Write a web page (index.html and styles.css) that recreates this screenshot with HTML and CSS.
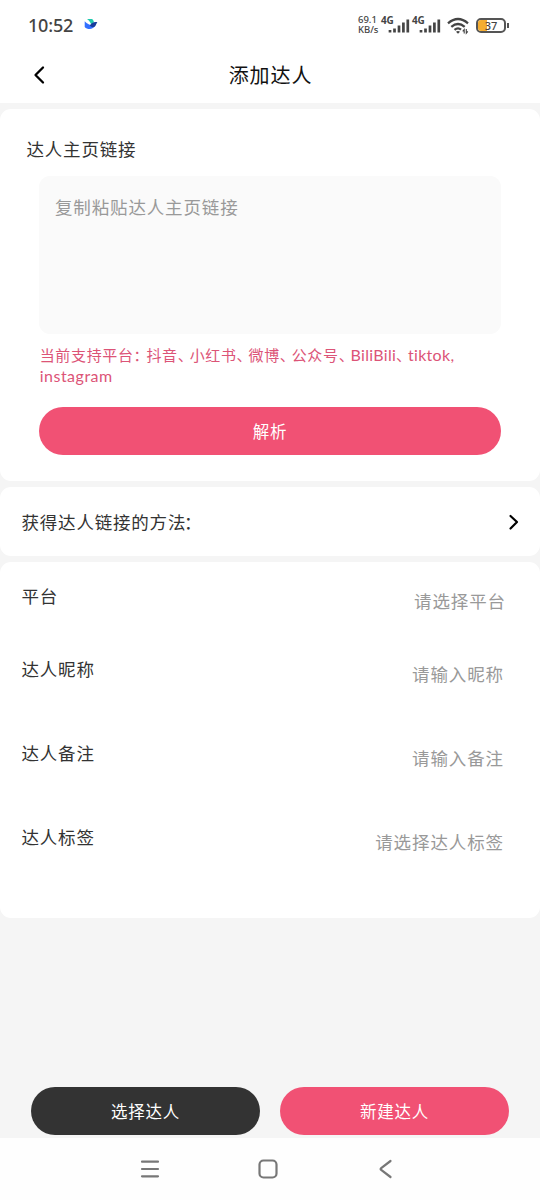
FILE: index.html
```html
<!DOCTYPE html>
<html lang="zh-CN">
<head>
<meta charset="utf-8">
<title>添加达人</title>
<link rel="stylesheet" href="styles.css">
</head>
<body>
<div class="screen">
  <header class="top">
    <div class="status">
      <span class="clock">10:52</span>
      <svg class="bird" width="14" height="13" viewBox="0 0 14 13">
        <path d="M3 1h5.2c1 .9 1.6 2 1.8 3.3L7.2 6.2C6.200 4 4.900 2.300 3 1z" fill="#1fc9ae"/>
        <path d="M.7 3.300v5.600C3.600 12.200 9.600 11.600 11.500 7.300 7.600 8.600 3.600 6.400.7 3.300z" fill="#3370ff"/>
        <path d="M5.800 7.400C7.500 5.300 9.600 3.400 13.400 4.200 12.100 5.400 11.900 8.700 9.600 9.100 8.100 9.300 6.900 8.500 5.800 7.400z" fill="#173c9c"/>
      </svg>
      <span class="rate"><span>69.1</span><span>KB/s</span></span>
      <span class="gen">4G</span>
      <svg class="bars" width="22" height="14" viewBox="0 0 22 14"><path d="M2 11v2.500M6.500 9.500v4M11 6.500v7M15.400 3.500v10M19.800.5v13" stroke="#444" stroke-width="2.700"/></svg>
      <span class="gen gen-second">4G</span>
      <svg class="bars" width="22" height="14" viewBox="0 0 22 14"><path d="M2 11v2.500M6.500 9.500v4M11 6.500v7M15.400 3.500v10M19.800.5v13" stroke="#444" stroke-width="2.700"/></svg>
      <svg class="wifi" width="23" height="18" viewBox="0 0 23 18">
        <g fill="none" stroke="#444" stroke-width="2.300"><path d="M1 6.300Q11 -2.300 21 6.300M4.300 9.800Q11 4.200 17.700 9.800M7.500 12.900Q11 10 14 12.600"/></g>
        <path d="M9 14.800Q11 13.200 13 14.800L11 16.800z" fill="#444"/>
        <path d="M17.200 16.500v-4l-1.500 1.800M19.300 12v4.200l1.500-1.800" fill="none" stroke="#444" stroke-width="1.100"/>
      </svg>
      <span class="battery"><span class="cell"><i class="charge"></i><b class="level">37</b></span><i class="cap"></i></span>
    </div>
    <div class="titlebar">
      <svg class="back" width="12" height="20" viewBox="0 0 12 20"><path d="M10 2.500L2.500 10 10 17.500" fill="none" stroke="#000" stroke-width="2.300" stroke-linecap="round" stroke-linejoin="round"/></svg>
      <h1 class="title">添加达人</h1>
    </div>
  </header>

  <section class="card link-card">
    <h2 class="label">达人主页链接</h2>
    <div class="textarea">复制粘贴达人主页链接</div>
    <p class="support">当前支持平台<span class="punct colon">：</span>抖音<span class="punct">、</span>小红书<span class="punct">、</span>微博<span class="punct">、</span>公众号<span class="punct">、</span><span class="latin">BiliBili</span><span class="punct">、</span><span class="latin">tiktok,</span><br><span class="latin wide">instagram</span></p>
    <div class="button pink parse">解析</div>
  </section>

  <section class="card method">
    <span class="label">获得达人链接的方<span class="tight">法</span>：</span>
    <svg class="more" width="12" height="18" viewBox="0 0 12 18"><path d="M2.500 3l6.500 6-6.500 6.500" fill="none" stroke="#000" stroke-width="2.200" stroke-linecap="round" stroke-linejoin="round"/></svg>
  </section>

  <section class="card form">
    <div class="row row-platform"><span class="label">平台</span><span class="hint">请选择平台</span></div>
    <div class="row"><span class="label">达人昵称</span><span class="hint">请输入昵称</span></div>
    <div class="row"><span class="label">达人备注</span><span class="hint">请输入备注</span></div>
    <div class="row"><span class="label">达人标签</span><span class="hint">请选择达人标签</span></div>
  </section>

  <div class="actions">
    <div class="button dark">选择达人</div>
    <div class="button pink">新建达人</div>
  </div>

  <nav class="system-nav">
    <svg width="20" height="20" viewBox="0 0 20 20"><path d="M2 2.700h16M2 10h16M2 17.300h16" stroke="#777" stroke-width="2.200" stroke-linecap="round"/></svg>
    <svg width="20" height="20" viewBox="0 0 20 20"><rect x="1.500" y="1.500" width="17" height="17" rx="4" fill="none" stroke="#777" stroke-width="2.200"/></svg>
    <svg width="20" height="20" viewBox="0 0 20 20"><path d="M14.500 2L5.200 9Q4 10 5.200 11l9.300 7" fill="none" stroke="#777" stroke-width="2.200" stroke-linecap="round"/></svg>
  </nav>
</div>
</body>
</html>
```
FILE: styles.css
```css
* { box-sizing: border-box; }
body {
  margin: 0;
  background: #f5f5f5;
  color: #333;
  font-family: "Noto Sans CJK SC", sans-serif;
}
.screen {
  width: 540px;
  height: 1200px;
  display: flex;
  flex-direction: column;
  overflow: hidden;
}
svg { display: block; flex: none; }
.top { height: 103px; background: #fff; flex: none; }
.status {
  height: 50px;
  padding: 0 31px 0 28px;
  display: flex;
  align-items: center;
  color: #444;
}
.clock {
  width: 56px;
  font: 500 18px/24px "Noto Sans", sans-serif;
  letter-spacing: -.2px;
}
.bird { margin-top: -1px; }
.rate {
  margin-left: auto;
  width: 23px;
  display: flex;
  flex-direction: column;
  font: 500 9.500px/10px "Noto Sans", sans-serif;
}
.gen {
  width: 14px;
  margin: -10px -7px 0 0;
  font: 700 10px/10px "Noto Sans", sans-serif;
  letter-spacing: -.2px;
}
.gen-second { margin-left: 2px; }
.bars { margin-top: 1px; }
.wifi { margin: 1px 0 0 6px; }
.battery { display: flex; align-items: center; margin-left: 6px; }
.cell {
  width: 30px;
  height: 15px;
  display: grid;
  border: 2px solid #555;
  border-radius: 5px;
  overflow: hidden;
}
.charge { grid-area: 1 / 1; width: 9px; background: #f4ad32; }
.level {
  grid-area: 1 / 1;
  text-align: center;
  font: 500 11px/11px "Noto Sans", sans-serif;
}
.cap { width: 2px; height: 5px; margin-left: 1px; background: #555; }
.titlebar {
  height: 50px;
  padding: 0 33px;
  display: flex;
  align-items: center;
}
.back { width: 12px; }
.title {
  flex: 1;
  margin: 0 11px 0 0;
  text-align: center;
  color: #111;
  font-size: 20px;
  line-height: 28px;
  font-weight: 400;
  letter-spacing: .9px;
}
.card { background: #fff; border-radius: 11px; flex: none; }
.label {
  margin: 0;
  font-size: 17.500px;
  font-weight: 400;
  line-height: 26px;
  letter-spacing: .8px;
}
.link-card { height: 372px; margin-top: 6px; padding: 27px 39px 0; }
.link-card .label { margin-left: -12.500px; }
.textarea {
  height: 158px;
  margin-top: 14px;
  padding: 18px 16px;
  border-radius: 11px;
  background: #fafafa;
  color: #999;
  font-size: 17.500px;
  line-height: 26px;
  letter-spacing: .85px;
}
.support {
  margin: 10px 0 0 .7px;
  color: #dc5477;
  font-size: 15px;
  line-height: 21px;
  letter-spacing: .65px;
  white-space: nowrap;
}
.punct { letter-spacing: -3.100px; }
.colon { letter-spacing: -2.200px; }
.latin { font-family: Lato, sans-serif; font-size: 16px; letter-spacing: .3px; }
.wide { letter-spacing: .5px; }
.button {
  height: 48px;
  border-radius: 24px;
  color: #fff;
  text-align: center;
  font-size: 16.500px;
  line-height: 48px;
  letter-spacing: .7px;
}
.pink { background: #f15174; }
.dark { background: #333; }
.parse { margin-top: 21px; }
.method {
  height: 69px;
  margin-top: 6px;
  padding: 0 20px 0 21.500px;
  display: flex;
  align-items: center;
  justify-content: space-between;
}
.tight { letter-spacing: -1.500px; }
.form { height: 356px; margin-top: 6px; padding: 21px 36px 0 21.500px; }
.row {
  height: 84px;
  display: flex;
  align-items: flex-start;
  justify-content: space-between;
}
.row-platform { height: 73px; margin-right: -2px; }
.hint {
  margin-top: 5px;
  color: #999;
  font-size: 17.500px;
  line-height: 26px;
  letter-spacing: .9px;
}
.actions {
  margin-top: auto;
  padding: 0 31px 3.500px;
  display: grid;
  grid-template-columns: 1fr 1fr;
  gap: 20px;
}
.actions .button { line-height: 49px; }
.system-nav {
  height: 62px;
  padding: 0 144px 0 140px;
  flex: none;
  display: flex;
  align-items: center;
  justify-content: space-between;
  background: #fefefe;
}
```
